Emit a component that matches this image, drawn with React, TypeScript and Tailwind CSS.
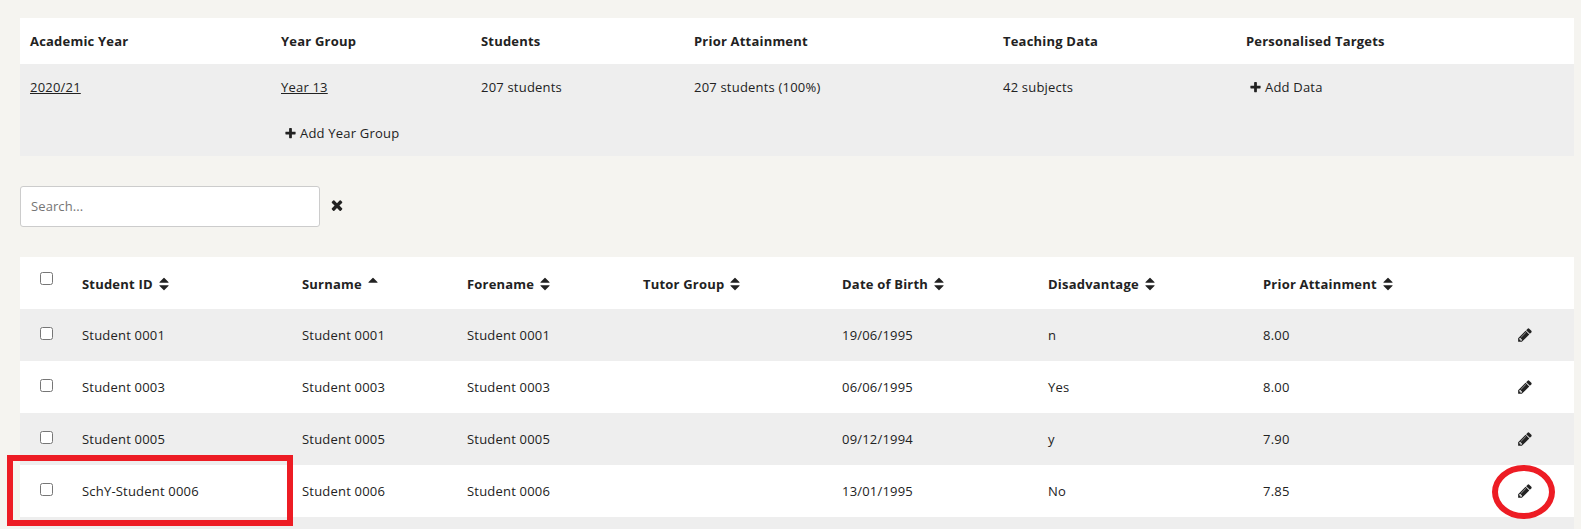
import React from 'react'

const icons = {
  plus: 'M1600 736v192q0 40-28 68t-68 28h-416v416q0 40-28 68t-68 28h-192q-40 0-68-28t-28-68v-416h-416q-40 0-68-28t-28-68v-192q0-40 28-68t68-28h416v-416q0-40 28-68t68-28h192q40 0 68 28t28 68v416h416q40 0 68 28t28 68z',
  times: 'M1490 1322q0 40-28 68l-136 136q-28 28-68 28t-68-28l-294-294-294 294q-28 28-68 28t-68-28l-136-136q-28-28-28-68t28-68l294-294-294-294q-28-28-28-68t28-68l136-136q28-28 68-28t68 28l294 294 294-294q28-28 68-28t68 28l136 136q28 28 28 68t-28 68l-294 294 294 294q28 28 28 68z',
  sort: 'M1408 1088q0 26-19 45l-448 448q-19 19-45 19t-45-19l-448-448q-19-19-19-45t19-45 45-19h896q26 0 45 19t19 45zm0-384q0 26-19 45t-45 19h-896q-26 0-45-19t-19-45 19-45l448-448q19-19 45-19t45 19l448 448q19 19 19 45z',
  sortAsc: 'M1408 704q0 26-19 45t-45 19h-896q-26 0-45-19t-19-45 19-45l448-448q19-19 45-19t45 19l448 448q19 19 19 45z',
  pencil: 'M491 1536l91-91-235-235-91 91v107h128v128h107zm523-928q0-22-22-22-10 0-17 7l-542 542q-7 7-7 17 0 22 22 22 10 0 17-7l542-542q7-7 7-17zm-54-192l416 416-832 832h-416v-416zm683 96q0 53-37 90l-166 166-416-416 166-165q36-38 90-38 53 0 91 38l235 234q37 39 37 91z',
}

const Icon = ({ name, className }: { name: keyof typeof icons; className: string }) => (
  <svg viewBox="0 0 1792 1792" fill="currentColor" className={className}>
    <path d={icons[name]} />
  </svg>
)

const summaryColumns = [
  { label: 'Academic Year', width: 'w-[251px]' },
  { label: 'Year Group', width: 'w-[200px]' },
  { label: 'Students', width: 'w-[213px]' },
  { label: 'Prior Attainment', width: 'w-[309px]' },
  { label: 'Teaching Data', width: 'w-[243px]' },
  { label: 'Personalised Targets', width: 'w-[338px]' },
]

const studentColumns = [
  { label: 'Student ID', width: 'w-[220px]' },
  { label: 'Surname', width: 'w-[165px]', sorted: true },
  { label: 'Forename', width: 'w-[176px]' },
  { label: 'Tutor Group', width: 'w-[199px]' },
  { label: 'Date of Birth', width: 'w-[206px]' },
  { label: 'Disadvantage', width: 'w-[215px]' },
  { label: 'Prior Attainment', width: 'w-[255px]' },
]

const students = [
  { id: 'Student 0001', name: 'Student 0001', dob: '19/06/1995', disadvantage: 'n', prior: '8.00' },
  { id: 'Student 0003', name: 'Student 0003', dob: '06/06/1995', disadvantage: 'Yes', prior: '8.00' },
  { id: 'Student 0005', name: 'Student 0005', dob: '09/12/1994', disadvantage: 'y', prior: '7.90' },
  { id: 'SchY-Student 0006', name: 'Student 0006', dob: '13/01/1995', disadvantage: 'No', prior: '7.85' },
]

const AddLink = ({ label }: { label: string }) => (
  <a href="#" className="flex items-center gap-[3.5px] pl-[2.5px]">
    <Icon name="plus" className="size-[13px]" />
    {label}
  </a>
)

const SummaryTable = () => (
  <table className="w-[1554px] table-fixed border-collapse text-left">
    <thead>
      <tr className="h-[46px] bg-white">
        {summaryColumns.map((col) => (
          <th key={col.label} className={`${col.width} pl-[10px] font-bold`}>{col.label}</th>
        ))}
      </tr>
    </thead>
    <tbody className="bg-[#eeeeee]">
      <tr className="h-[46px]">
        <td className="pl-[10px]"><a href="#" className="underline">2020/21</a></td>
        <td className="pl-[10px]"><a href="#" className="underline">Year 13</a></td>
        <td className="pl-[10px]">207 students</td>
        <td className="pl-[10px]">207 students (100%)</td>
        <td className="pl-[10px]">42 subjects</td>
        <td className="pl-[10px]"><AddLink label="Add Data" /></td>
      </tr>
      <tr className="h-[46px]">
        <td></td>
        <td className="pl-[10px]"><AddLink label="Add Year Group" /></td>
        <td colSpan={4}></td>
      </tr>
    </tbody>
  </table>
)

const StudentTable = () => (
  <table className="w-[1554px] table-fixed border-collapse text-left">
    <thead>
      <tr className="h-[52px] bg-white">
        <th className="w-[52px] pt-[15px] pl-[20px] align-top">
          <input type="checkbox" className="block size-[13px]" />
        </th>
        {studentColumns.map((col) => (
          <th key={col.label} className={`${col.width} pt-[2px] pl-[10px] font-bold`}>
            <span className="flex items-center gap-[3px]">
              {col.label}
              <Icon name={col.sorted ? 'sortAsc' : 'sort'} className="size-4" />
            </span>
          </th>
        ))}
        <th></th>
      </tr>
    </thead>
    <tbody>
      {students.map((student) => (
        <tr key={student.id} className="h-[52px] odd:bg-[#eeeeee] even:bg-white">
          <td className="pt-[18px] pl-[20px] align-top">
            <input type="checkbox" className="block size-[13px]" />
          </td>
          <td className="pl-[10px]">{student.id}</td>
          <td className="pl-[10px]">{student.name}</td>
          <td className="pl-[10px]">{student.name}</td>
          <td></td>
          <td className="pl-[10px]">{student.dob}</td>
          <td className="pl-[10px]">{student.disadvantage}</td>
          <td className="pl-[10px]">{student.prior}</td>
          <td className="pl-[9px]"><Icon name="pencil" className="size-4" /></td>
        </tr>
      ))}
      <tr className="h-[52px] bg-[#eeeeee]">
        <td colSpan={9}></td>
      </tr>
    </tbody>
  </table>
)

const App = () => {
  return (
    <div className="relative h-[529px] overflow-hidden bg-[#f5f4f0] pt-[18px] pl-[20px] font-['Open_Sans',sans-serif] text-[13px] leading-5 tracking-[0.2px] text-[#222222]">
      <SummaryTable />

      {/* Search */}
      <div className="mt-[30px] mb-[30px] flex items-center gap-[8.5px]">
        <input
          type="text"
          placeholder="Search..."
          className="h-[41px] w-[300px] rounded-[3px] border border-[#cccccc] bg-white px-[10px] pb-[2px] tracking-[0.1px] placeholder:text-[#757575]"
        />
        <Icon name="times" className="mb-[3px] size-4" />
      </div>

      <StudentTable />

      {/* Highlights over the last student row */}
      <div className="pointer-events-none absolute top-[455px] left-[7px] h-[71px] w-[286px] border-[6px] border-[#ed1c24]" />
      <div className="pointer-events-none absolute top-[465px] left-[1492px] h-[54px] w-[63px] rounded-[50%] border-[6px] border-[#ed1c24]" />
    </div>
  )
}

export default App
